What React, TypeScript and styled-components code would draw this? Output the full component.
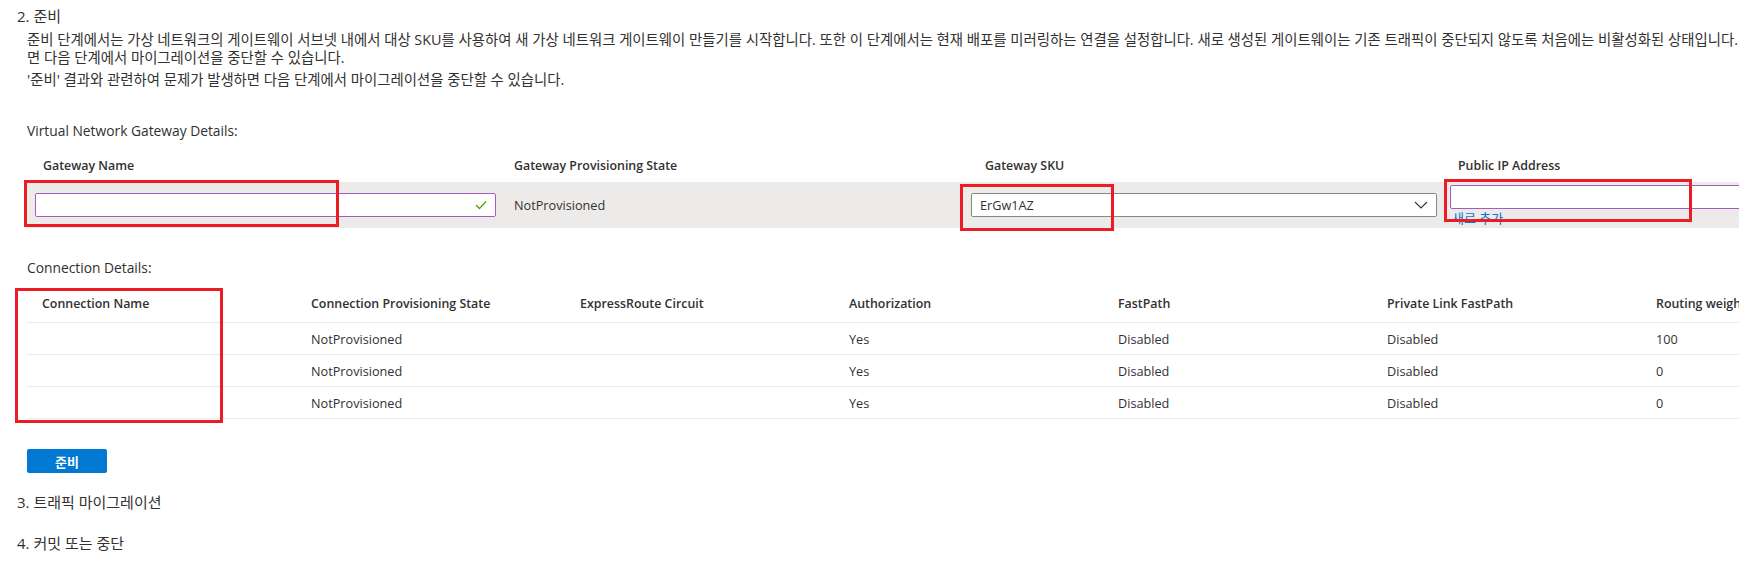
import React from 'react'
import styled, { createGlobalStyle } from 'styled-components'

const GlobalStyle = createGlobalStyle`
  html, body {
    margin: 0;
    padding: 0;
    background: #ffffff;
    overflow: hidden;
  }
  body {
    font-family: "Open Sans", "Noto Sans CJK KR", sans-serif;
    font-size: 13px;
    color: #323130;
  }
`

const Page = styled.div`
  padding: 0 0 0 17px;
  width: 2200px;
`

const StepTitle = styled.div<{ $top: number }>`
  font-size: 15px;
  line-height: 22px;
  margin-top: ${({ $top }) => $top}px;
`

const Body = styled.div`
  margin-left: 10px;
`

const Description = styled.div`
  margin-top: 4px;
  font-size: 14.4px;
  line-height: 18px;
  white-space: nowrap;
`

const DescLine = styled.p<{ $gap?: number }>`
  margin: ${({ $gap }) => $gap || 0}px 0 0 0;
`

const SubHeading = styled.div<{ $top: number }>`
  margin-top: ${({ $top }) => $top}px;
  font-size: 13.8px;
  line-height: 18px;
`

const GatewayGrid = styled.div`
  margin-top: 8px;
  display: grid;
  grid-template-columns: repeat(4, 471px);
`

const HeadCell = styled.div<{ $pad: number }>`
  height: 34px;
  display: flex;
  align-items: center;
  padding-left: ${({ $pad }) => $pad}px;
  font-weight: 600;
  font-size: 12.4px;
  white-space: nowrap;
`

const GrayCell = styled.div<{ $pad: number; $padRight?: number }>`
  position: relative;
  height: 46px;
  background: #edebe9;
  padding-left: ${({ $pad }) => $pad}px;
  padding-right: ${({ $padRight }) => ($padRight === undefined ? 2 : $padRight)}px;
  display: flex;
  align-items: center;
  font-size: 12.7px;
  white-space: nowrap;
`

const Clip = styled.div`
  box-sizing: border-box;
  height: 46px;
  width: 100%;
  overflow: hidden;
  padding-top: 3px;
  display: flex;
  flex-direction: column;
`

const TextInput = styled.div<{ $border: string }>`
  box-sizing: border-box;
  height: 24px;
  width: 100%;
  flex-shrink: 0;
  background: #ffffff;
  border: 1px solid ${({ $border }) => $border};
  border-radius: 2px;
  display: flex;
  align-items: center;
  justify-content: space-between;
  padding: 0 8px;
  font-size: 12.7px;
`

const LinkText = styled.div`
  color: #0078d4;
  font-size: 13px;
  line-height: 18px;
  margin-left: 2px;
`

const Marker = styled.div<{ $l: number; $t: number; $w: number; $h: number }>`
  position: absolute;
  left: ${({ $l }) => $l}px;
  top: ${({ $t }) => $t}px;
  width: ${({ $w }) => $w}px;
  height: ${({ $h }) => $h}px;
  box-sizing: border-box;
  border: 3px solid #ec1c24;
  pointer-events: none;
`

const ConnTable = styled.div`
  position: relative;
  margin-top: 8px;
  display: grid;
  grid-template-columns: repeat(7, 269px);
`

const ConnHead = styled.div`
  height: 37px;
  display: flex;
  align-items: center;
  padding-left: 15px;
  font-weight: 600;
  font-size: 12.4px;
  border-bottom: 1px solid #edebe9;
  white-space: nowrap;
`

const ConnCell = styled.div`
  height: 31px;
  display: flex;
  align-items: center;
  padding-left: 15px;
  font-size: 12.7px;
  border-bottom: 1px solid #edebe9;
  white-space: nowrap;
`

const PrimaryButton = styled.button`
  margin-top: 30px;
  width: 80px;
  height: 24px;
  border: none;
  border-radius: 2px;
  background: #0078d4;
  color: #ffffff;
  font-family: "Noto Sans CJK KR", sans-serif;
  font-weight: 700;
  font-size: 13px;
  padding: 0;
  display: block;
`

const CheckIcon = () => (
  <svg width="12" height="10" viewBox="0 0 12 10">
    <polyline points="1,5 4.5,8.5 11,1.5" fill="none" stroke="#57a300" strokeWidth="1.3" />
  </svg>
)

const ChevronIcon = () => (
  <svg width="14" height="8" viewBox="0 0 14 8">
    <polyline points="1,1 7,7 13,1" fill="none" stroke="#323130" strokeWidth="1.1" />
  </svg>
)

const connRows = [
  { state: 'NotProvisioned', auth: 'Yes', fast: 'Disabled', plink: 'Disabled', weight: '100' },
  { state: 'NotProvisioned', auth: 'Yes', fast: 'Disabled', plink: 'Disabled', weight: '0' },
  { state: 'NotProvisioned', auth: 'Yes', fast: 'Disabled', plink: 'Disabled', weight: '0' },
]

const connHeaders = [
  'Connection Name',
  'Connection Provisioning State',
  'ExpressRoute Circuit',
  'Authorization',
  'FastPath',
  'Private Link FastPath',
  'Routing weight',
]

export default function App() {
  return (
    <Page>
      <GlobalStyle />
      <StepTitle $top={5}>2. 준비</StepTitle>
      <Body>
        <Description>
          <DescLine>
            준비 단계에서는 가상 네트워크의 게이트웨이 서브넷 내에서 대상 SKU를 사용하여 새 가상 네트워크 게이트웨이 만들기를 시작합니다. 또한 이 단계에서는 현재 배포를 미러링하는 연결을 설정합니다. 새로 생성된 게이트웨이는 기존 트래픽이 중단되지 않도록 처음에는 비활성화된 상태입니다. 준비 결과와 관련하여 문제가 발생하
          </DescLine>
          <DescLine>면 다음 단계에서 마이그레이션을 중단할 수 있습니다.</DescLine>
          <DescLine $gap={4}>'준비' 결과와 관련하여 문제가 발생하면 다음 단계에서 마이그레이션을 중단할 수 있습니다.</DescLine>
        </Description>

        <SubHeading $top={33}>Virtual Network Gateway Details:</SubHeading>
        <GatewayGrid>
          <HeadCell $pad={16}>Gateway Name</HeadCell>
          <HeadCell $pad={16}>Gateway Provisioning State</HeadCell>
          <HeadCell $pad={16}>Gateway SKU</HeadCell>
          <HeadCell $pad={18}>Public IP Address</HeadCell>

          <GrayCell $pad={8}>
            <TextInput $border="#a35cc4">
              <span />
              <CheckIcon />
            </TextInput>
            <Marker $l={-3} $t={-2} $w={315} $h={47} />
          </GrayCell>
          <GrayCell $pad={16}>NotProvisioned</GrayCell>
          <GrayCell $pad={2} $padRight={3}>
            <TextInput $border="#8a8886">
              <span>ErGw1AZ</span>
              <ChevronIcon />
            </TextInput>
            <Marker $l={-9} $t={2} $w={154} $h={47} />
          </GrayCell>
          <GrayCell $pad={10} $padRight={0}>
            <Clip>
              <TextInput $border="#a35cc4" />
              <LinkText>새로 추가</LinkText>
            </Clip>
            <Marker $l={4} $t={-3} $w={248} $h={43} />
          </GrayCell>
        </GatewayGrid>

        <SubHeading $top={31}>Connection Details:</SubHeading>
        <ConnTable>
          {connHeaders.map((h) => (
            <ConnHead key={h}>{h}</ConnHead>
          ))}
          {connRows.map((r, i) => (
            <React.Fragment key={i}>
              <ConnCell />
              <ConnCell>{r.state}</ConnCell>
              <ConnCell />
              <ConnCell>{r.auth}</ConnCell>
              <ConnCell>{r.fast}</ConnCell>
              <ConnCell>{r.plink}</ConnCell>
              <ConnCell>{r.weight}</ConnCell>
            </React.Fragment>
          ))}
          <Marker $l={-12} $t={3} $w={208} $h={135} />
        </ConnTable>

        <PrimaryButton>준비</PrimaryButton>
      </Body>
      <StepTitle $top={18}>3. 트래픽 마이그레이션</StepTitle>
      <StepTitle $top={19}>4. 커밋 또는 중단</StepTitle>
    </Page>
  )
}
